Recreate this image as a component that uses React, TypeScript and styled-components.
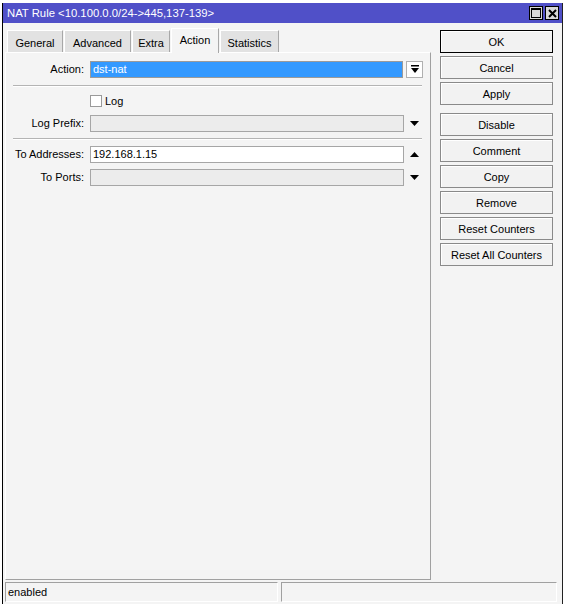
import styled, { createGlobalStyle } from "styled-components";

const Global = createGlobalStyle`
  body {
    margin: 0;
    background: #fff;
    font-family: "Liberation Sans", Arial, sans-serif;
    font-size: 11px;
    color: #000;
  }
`;

const Window = styled.div`
  margin: 3px 0 0 2px;
  width: 561px;
  height: 601px;
  box-sizing: border-box;
  border-left: 1px solid #000;
  border-right: 1px solid #222;
  background: #f4f4f4;
  display: flex;
  flex-direction: column;
`;

const TitleBar = styled.div`
  height: 20px;
  flex: none;
  background: #5050c8;
  color: #fff;
  font-size: 11.3px;
  display: flex;
  align-items: center;
  justify-content: space-between;
  padding: 0 3px 0 4px;
`;

const TitleButtons = styled.div`
  display: flex;
  gap: 2px;
`;

const TitleButton = styled.div`
  width: 14px;
  height: 14px;
  box-sizing: border-box;
  border: 1px solid #000;
  background: #d8d8d8;
  display: flex;
  align-items: center;
  justify-content: center;
`;

const Body = styled.div`
  height: 557px;
  display: flex;
`;

const Main = styled.div`
  width: 428px;
  box-sizing: border-box;
  padding: 4px 0 0 2px;
  display: flex;
  flex-direction: column;
`;

const Tabs = styled.div`
  height: 25px;
  display: flex;
  align-items: flex-end;
  padding-left: 2px;
  position: relative;
  z-index: 1;
`;

const Tab = styled.div<{ $active?: boolean; $w: number }>`
  width: ${(p) => p.$w}px;
  height: ${(p) => (p.$active ? 25 : 22)}px;
  margin-bottom: ${(p) => (p.$active ? -1 : 0)}px;
  box-sizing: border-box;
  padding-top: ${(p) => (p.$active ? 5 : 6)}px;
  text-align: center;
  background: ${(p) => (p.$active ? "#f4f4f4" : "#e2e2e2")};
  border-left: 1px solid #fff;
  border-top: 1px solid #fff;
  border-right: 1px solid #a8a8a8;
  margin-right: 1px;
`;

const Panel = styled.div`
  height: 529px;
  box-sizing: border-box;
  border-top: 1px solid #fff;
  border-left: 1px solid #fff;
  border-right: 1px solid #a0a0a0;
  border-bottom: 1px solid #a0a0a0;
  padding: 8px 0 0 0;
`;

const Row = styled.div<{ $top: number }>`
  display: flex;
  align-items: center;
  margin-top: ${(p) => p.$top}px;
  height: 17px;
`;

const Label = styled.div`
  width: 78px;
  margin-right: 6px;
  text-align: right;
  white-space: nowrap;
`;

const Field = styled.div<{ $kind: "selected" | "white" | "disabled" }>`
  width: ${(p) => (p.$kind === "selected" ? 313 : 314)}px;
  height: 17px;
  box-sizing: border-box;
  border: 1px solid ${(p) => (p.$kind === "selected" ? "#9a9a9a" : "#a6a6a6")};
  background: ${(p) =>
    p.$kind === "selected" ? "#3399ff" : p.$kind === "white" ? "#fff" : "#ececec"};
  color: ${(p) => (p.$kind === "selected" ? "#fff" : "#000")};
  padding: 0 2px;
  line-height: 15px;
`;

const DropButton = styled.div`
  width: 17px;
  height: 17px;
  margin-left: 3px;
  box-sizing: border-box;
  border: 1px solid #b0b0b0;
  background: #fff;
  display: flex;
  align-items: center;
  justify-content: center;
`;

const Arrow = styled.div`
  width: 16px;
  margin-left: 2px;
  display: flex;
  justify-content: center;
`;

const Separator = styled.div<{ $top: number }>`
  margin: ${(p) => p.$top}px 8px 0 7px;
  height: 0;
  border-top: 1px solid #b4b4b4;
  border-bottom: 1px solid #fff;
`;

const CheckRow = styled.div`
  display: flex;
  align-items: center;
  margin: 9px 0 0 84px;
  height: 11px;
  gap: 3px;
`;

const CheckBox = styled.div`
  width: 12px;
  height: 12px;
  box-sizing: border-box;
  border: 1px solid #9a9a9a;
  background: #fff;
`;

const Side = styled.div`
  padding: 7px 0 0 9px;
  display: flex;
  flex-direction: column;
  gap: 3px;
`;

const Button = styled.div<{ $default?: boolean; $gapBefore?: boolean }>`
  width: 113px;
  height: 23px;
  box-sizing: border-box;
  border: 1px solid ${(p) => (p.$default ? "#000" : "#8a8a8a")};
  box-shadow: inset 1px 1px 0 #fff;
  background: #f2f2f2;
  display: flex;
  align-items: center;
  justify-content: center;
  margin-top: ${(p) => (p.$gapBefore ? 5 : 0)}px;
`;

const StatusBar = styled.div`
  display: flex;
  gap: 3px;
  padding: 2px 0 0 2px;
`;

const StatusCell = styled.div<{ $w: number }>`
  width: ${(p) => p.$w}px;
  height: 20px;
  box-sizing: border-box;
  border-top: 1px solid #a0a0a0;
  border-left: 1px solid #a0a0a0;
  border-right: 1px solid #fff;
  border-bottom: 1px solid #fff;
  padding: 3px 0 0 2px;
`;

function Triangle({ up }: { up?: boolean }) {
  return (
    <svg width="9" height="5" viewBox="0 0 9 5">
      <polygon points={up ? "4.5,0 9,5 0,5" : "0,0 9,0 4.5,5"} fill="#000" />
    </svg>
  );
}

const tabs = [
  { name: "General", w: 56 },
  { name: "Advanced", w: 67 },
  { name: "Extra", w: 38 },
  { name: "Action", w: 48 },
  { name: "Statistics", w: 59 },
];

export default function App() {
  return (
    <>
      <Global />
      <Window>
        <TitleBar>
          <span>NAT Rule &lt;10.100.0.0/24-&gt;445,137-139&gt;</span>
          <TitleButtons>
            <TitleButton>
              <svg width="10" height="10" viewBox="0 0 10 10">
                <rect x="0.5" y="0.5" width="9" height="9" fill="none" stroke="#000" />
                <rect x="0" y="0" width="10" height="2" fill="#000" />
              </svg>
            </TitleButton>
            <TitleButton>
              <svg width="9" height="9" viewBox="0 0 9 9">
                <path d="M1 1 L8 8 M8 1 L1 8" stroke="#000" strokeWidth="2" />
              </svg>
            </TitleButton>
          </TitleButtons>
        </TitleBar>
        <Body>
          <Main>
            <Tabs>
              {tabs.map((t) => (
                <Tab key={t.name} $w={t.w} $active={t.name === "Action"}>
                  {t.name}
                </Tab>
              ))}
            </Tabs>
            <Panel>
              <Row $top={0}>
                <Label>Action:</Label>
                <Field $kind="selected">dst-nat</Field>
                <DropButton>
                  <svg width="8" height="8" viewBox="0 0 8 8">
                    <rect x="0" y="0" width="8" height="1.5" fill="#000" />
                    <polygon points="0,3 8,3 4,8" fill="#000" />
                  </svg>
                </DropButton>
              </Row>
              <Separator $top={7} />
              <CheckRow>
                <CheckBox />
                <span>Log</span>
              </CheckRow>
              <Row $top={8}>
                <Label>Log Prefix:</Label>
                <Field $kind="disabled" />
                <Arrow>
                  <Triangle />
                </Arrow>
              </Row>
              <Separator $top={6} />
              <Row $top={6}>
                <Label>To Addresses:</Label>
                <Field $kind="white">192.168.1.15</Field>
                <Arrow>
                  <Triangle up />
                </Arrow>
              </Row>
              <Row $top={6}>
                <Label>To Ports:</Label>
                <Field $kind="disabled" />
                <Arrow>
                  <Triangle />
                </Arrow>
              </Row>
            </Panel>
          </Main>
          <Side>
            <Button $default>OK</Button>
            <Button>Cancel</Button>
            <Button>Apply</Button>
            <Button $gapBefore>Disable</Button>
            <Button>Comment</Button>
            <Button>Copy</Button>
            <Button>Remove</Button>
            <Button>Reset Counters</Button>
            <Button>Reset All Counters</Button>
          </Side>
        </Body>
        <StatusBar>
          <StatusCell $w={273}>enabled</StatusCell>
          <StatusCell $w={276} />
        </StatusBar>
      </Window>
    </>
  );
}
